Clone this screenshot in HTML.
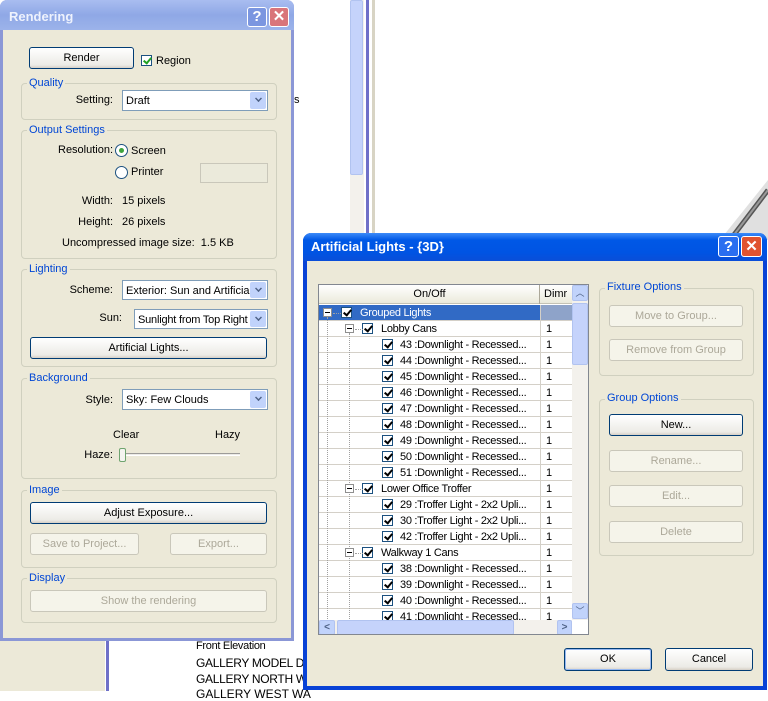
<!DOCTYPE html>
<html><head><meta charset="utf-8"><style>
*{box-sizing:border-box;margin:0;padding:0}
body{width:768px;height:691px;position:relative;overflow:hidden;background:#fff;font-family:"Liberation Sans",sans-serif;font-size:11px;color:#000}
.a{position:absolute}
.dlg{background:#ece9d8}
.grp{position:absolute;border:1px solid #d0d0bf;border-radius:4px}
.lg{position:absolute;background:#ece9d8;color:#0046d5;padding:0 2px;font-size:11px}
.btn{position:absolute;border:1px solid #003c74;border-radius:3px;background:linear-gradient(#fff,#ecebe6 85%,#d6d0c5);text-align:center;font-size:11px}
.btn.dis{border-color:#c9c7ba;background:#f5f4ea;color:#aca899}
.sel{position:absolute;background:#fff;border:1px solid #7f9db9;padding:4px 3px 0;font-size:11px;white-space:nowrap;overflow:hidden}
.sel:after{content:"";position:absolute;right:1px;top:1px;bottom:1px;width:16px;background:#c1d3fb;border-radius:2px}
.sel b{position:absolute;right:5px;top:4px;width:7px;height:7px;border-right:2px solid #4d6185;border-bottom:2px solid #4d6185;transform:rotate(45deg) scale(.7);z-index:2}
.cb{position:absolute;width:11px;height:11px;border:1px solid #1c5180;background:#fff}
.cb:after{content:"";position:absolute;left:3px;top:0px;width:3px;height:6px;border-right:2px solid #000;border-bottom:2px solid #000;transform:rotate(40deg)}
.cb.g:after{border-color:#21a121}
.row{position:absolute;left:0;width:221px;height:16px;border-bottom:1px solid #d4d0c8;line-height:16px;white-space:nowrap;letter-spacing:-.3px}
.dc{position:absolute;left:221px;width:33px;height:16px;border-bottom:1px solid #d4d0c8;border-left:1px solid #d4d0c8;line-height:16px;padding-left:5px}
.mb{position:absolute;width:9px;height:9px;border:1px solid #8f8f8f;background:#fff;z-index:2}
.mb:after{content:"";position:absolute;left:1px;top:3px;width:5px;height:1px;background:#000}
.vl{position:absolute;width:0;border-left:1px dotted #a0a0a0}
.hl{position:absolute;height:0;border-top:1px dotted #a0a0a0;width:8px}
.r{text-align:right}
</style></head><body>
<div class="a" style="left:350px;top:0;width:14px;height:233px;background:#f3f1ec"></div>
<div class="a" style="left:350px;top:0;width:13px;height:175px;background:#c5d3fb;border:1px solid #b1c3f0;border-radius:2px"></div>
<div class="a" style="left:366px;top:0;width:3px;height:233px;background:#6f70c8"></div>
<div class="a" style="left:372px;top:0;width:3px;height:233px;background:#d8d4c4"></div>
<svg class="a" style="left:700px;top:170px" width="68" height="70"><polygon points="68,10 68,70 20,70" fill="#e0e0e0"/><line x1="30" y1="70" x2="68" y2="20" stroke="#555" stroke-width="5"/><line x1="30" y1="70" x2="68" y2="20" stroke="#999" stroke-width="2"/></svg>
<div class="a" style="left:0;top:641px;width:105px;height:50px;background:#ece9d8"></div>
<div class="a" style="left:106px;top:641px;width:3px;height:50px;background:#6f70c8"></div>
<div class="a" style="left:196px;top:640px;font-size:11px;letter-spacing:-.3px">Front Elevation</div>
<div class="a" style="left:196px;top:656px;font-size:12px;letter-spacing:-.3px">GALLERY MODEL DIS</div>
<div class="a" style="left:196px;top:672px;font-size:12px;letter-spacing:-.3px">GALLERY NORTH WA</div>
<div class="a" style="left:196px;top:687px;font-size:12px">GALLERY WEST WA</div>
<div class="a" style="left:294px;top:94px;font-size:11px">s</div>

<div class="a dlg" style="left:0;top:0;width:294px;height:641px;border:3px solid #8b97d6;border-top:0;border-radius:7px 7px 0 0"></div>
<div class="a" style="left:0;top:0;width:294px;height:30px;background:linear-gradient(#a9bdf0,#8fa8e6 50%,#9cb3ea);border-radius:7px 7px 0 0"></div>
<div class="a" style="left:9px;top:9px;color:#eef2fd;font-weight:bold;font-size:13px">Rendering</div>
<div class="a" style="left:247px;top:7px;width:20px;height:20px;border:1px solid #fff;border-radius:3px;background:#7b96e0;color:#fff;font-weight:bold;font-size:15px;text-align:center;line-height:18px">?</div>
<div class="a" style="left:269px;top:7px;width:20px;height:20px;border:1px solid #fff;border-radius:3px;background:#d9757a;color:#fff;font-weight:bold;font-size:15px;text-align:center;line-height:18px">✕</div>
<div class="btn" style="left:29px;top:47px;width:105px;height:22px;line-height:20px">Render</div>
<div class="cb g" style="left:141px;top:55px"></div>
<div class="a" style="left:156px;top:55px">Region</div>

<div class="grp" style="left:21px;top:83px;width:256px;height:37px"></div>
<div class="lg" style="left:27px;top:77px">Quality</div>
<div class="a r" style="left:40px;top:94px;width:73px">Setting:</div>
<div class="sel" style="left:122px;top:90px;width:146px;height:21px">Draft<b></b></div>

<div class="grp" style="left:21px;top:130px;width:256px;height:129px"></div>
<div class="lg" style="left:27px;top:124px">Output Settings</div>
<div class="a" style="left:58px;top:144px">Resolution:</div>
<div class="a" style="left:115px;top:144px;width:13px;height:13px;border:1px solid #1c5180;border-radius:50%;background:#fff"></div>
<div class="a" style="left:119px;top:148px;width:5px;height:5px;border-radius:50%;background:#3ca33c"></div>
<div class="a" style="left:131px;top:145px">Screen</div>
<div class="a" style="left:115px;top:166px;width:13px;height:13px;border:1px solid #1c5180;border-radius:50%;background:#fff"></div>
<div class="a" style="left:131px;top:166px">Printer</div>
<div class="a" style="left:200px;top:163px;width:68px;height:20px;border:1px solid #c9c7ba;background:#ebeadb"></div>
<div class="a r" style="left:40px;top:195px;width:73px">Width:</div>
<div class="a" style="left:122px;top:195px">15 pixels</div>
<div class="a r" style="left:40px;top:216px;width:73px">Height:</div>
<div class="a" style="left:122px;top:216px">26 pixels</div>
<div class="a" style="left:62px;top:237px">Uncompressed image size:&nbsp; 1.5 KB</div>

<div class="grp" style="left:21px;top:269px;width:256px;height:98px"></div>
<div class="lg" style="left:27px;top:263px">Lighting</div>
<div class="a r" style="left:40px;top:284px;width:73px">Scheme:</div>
<div class="sel" style="left:122px;top:280px;width:146px;height:20px">Exterior: Sun and Artificia<b></b></div>
<div class="a r" style="left:60px;top:312px;width:62px">Sun:</div>
<div class="sel" style="left:134px;top:309px;width:134px;height:20px;letter-spacing:-.2px">Sunlight from Top Right<b></b></div>
<div class="btn" style="left:30px;top:337px;width:237px;height:22px;line-height:20px">Artificial Lights...</div>

<div class="grp" style="left:21px;top:378px;width:256px;height:101px"></div>
<div class="lg" style="left:27px;top:372px">Background</div>
<div class="a r" style="left:40px;top:394px;width:73px">Style:</div>
<div class="sel" style="left:122px;top:389px;width:146px;height:21px">Sky: Few Clouds<b></b></div>
<div class="a" style="left:113px;top:429px">Clear</div>
<div class="a" style="left:215px;top:429px">Hazy</div>
<div class="a r" style="left:40px;top:449px;width:73px">Haze:</div>
<div class="a" style="left:126px;top:453px;width:114px;height:3px;border-top:1px solid #9d9c99;border-bottom:1px solid #fff;background:#ecebe6"></div>
<div class="a" style="left:119px;top:448px;width:7px;height:14px;border:1px solid #6fa46f;border-radius:2px;background:#f4f4f0"></div>

<div class="grp" style="left:21px;top:490px;width:256px;height:78px"></div>
<div class="lg" style="left:27px;top:484px">Image</div>
<div class="btn" style="left:30px;top:502px;width:237px;height:22px;line-height:20px">Adjust Exposure...</div>
<div class="btn dis" style="left:30px;top:533px;width:109px;height:22px;line-height:20px">Save to Project...</div>
<div class="btn dis" style="left:170px;top:533px;width:97px;height:22px;line-height:20px">Export...</div>

<div class="grp" style="left:21px;top:578px;width:256px;height:45px"></div>
<div class="lg" style="left:27px;top:572px">Display</div>
<div class="btn dis" style="left:30px;top:590px;width:237px;height:22px;line-height:20px">Show the rendering</div>

<div class="a dlg" style="left:303px;top:233px;width:464px;height:457px;border:4px solid #0842d6;border-top:0;border-radius:8px 8px 0 0"></div>
<div class="a" style="left:303px;top:233px;width:464px;height:28px;background:linear-gradient(#3d8bf8,#0058e6 25%,#0054e3 70%,#0a4ed8);border-radius:8px 8px 0 0"></div>
<div class="a" style="left:311px;top:239px;color:#fff;font-weight:bold;font-size:13px">Artificial Lights - {3D}</div>
<div class="a" style="left:718px;top:236px;width:21px;height:21px;border:1px solid #fff;border-radius:3px;background:#2a6ef0;color:#fff;font-weight:bold;font-size:15px;text-align:center;line-height:19px">?</div>
<div class="a" style="left:741px;top:236px;width:21px;height:21px;border:1px solid #fff;border-radius:3px;background:#e0532f;color:#fff;font-weight:bold;font-size:15px;text-align:center;line-height:19px">✕</div>

<div class="a" style="left:318px;top:284px;width:271px;height:351px;border:1px solid #828790;background:#fff;overflow:hidden">
 <div class="a" style="left:0;top:0;width:253px;height:19px;background:linear-gradient(#fff,#ebeadb);border-bottom:1px solid #c4c2b5"></div>
 <div class="a" style="left:0;top:3px;width:221px;text-align:center">On/Off</div>
 <div class="a" style="left:220px;top:0;width:1px;height:19px;background:#aca899"></div>
 <div class="a" style="left:225px;top:3px">Dimr</div>
 <div class="a" style="left:0;top:20px;width:253px;height:316px;overflow:hidden">
  <div class="row" style="top:0;background:#316ac5;color:#fff"><span class="mb" style="left:4px;top:3px"></span><span class="cb" style="left:22px;top:2px"></span><span class="a" style="left:41px;top:0">Grouped Lights</span></div>
  <div class="dc" style="top:0;background:#8ea3c9"></div>
  <div class="row" style="top:16px"><span class="mb" style="left:26px;top:3px"></span><span class="cb" style="left:43px;top:2px"></span><span class="a" style="left:62px">Lobby Cans</span></div><div class="dc" style="top:16px">1</div>
  <div class="row" style="top:32px"><span class="cb" style="left:63px;top:2px"></span><span class="a" style="left:81px">43 :Downlight - Recessed...</span></div><div class="dc" style="top:32px">1</div>
  <div class="row" style="top:48px"><span class="cb" style="left:63px;top:2px"></span><span class="a" style="left:81px">44 :Downlight - Recessed...</span></div><div class="dc" style="top:48px">1</div>
  <div class="row" style="top:64px"><span class="cb" style="left:63px;top:2px"></span><span class="a" style="left:81px">45 :Downlight - Recessed...</span></div><div class="dc" style="top:64px">1</div>
  <div class="row" style="top:80px"><span class="cb" style="left:63px;top:2px"></span><span class="a" style="left:81px">46 :Downlight - Recessed...</span></div><div class="dc" style="top:80px">1</div>
  <div class="row" style="top:96px"><span class="cb" style="left:63px;top:2px"></span><span class="a" style="left:81px">47 :Downlight - Recessed...</span></div><div class="dc" style="top:96px">1</div>
  <div class="row" style="top:112px"><span class="cb" style="left:63px;top:2px"></span><span class="a" style="left:81px">48 :Downlight - Recessed...</span></div><div class="dc" style="top:112px">1</div>
  <div class="row" style="top:128px"><span class="cb" style="left:63px;top:2px"></span><span class="a" style="left:81px">49 :Downlight - Recessed...</span></div><div class="dc" style="top:128px">1</div>
  <div class="row" style="top:144px"><span class="cb" style="left:63px;top:2px"></span><span class="a" style="left:81px">50 :Downlight - Recessed...</span></div><div class="dc" style="top:144px">1</div>
  <div class="row" style="top:160px"><span class="cb" style="left:63px;top:2px"></span><span class="a" style="left:81px">51 :Downlight - Recessed...</span></div><div class="dc" style="top:160px">1</div>
  <div class="row" style="top:176px"><span class="mb" style="left:26px;top:3px"></span><span class="cb" style="left:43px;top:2px"></span><span class="a" style="left:62px">Lower Office Troffer</span></div><div class="dc" style="top:176px">1</div>
  <div class="row" style="top:192px"><span class="cb" style="left:63px;top:2px"></span><span class="a" style="left:81px">29 :Troffer Light - 2x2 Upli...</span></div><div class="dc" style="top:192px">1</div>
  <div class="row" style="top:208px"><span class="cb" style="left:63px;top:2px"></span><span class="a" style="left:81px">30 :Troffer Light - 2x2 Upli...</span></div><div class="dc" style="top:208px">1</div>
  <div class="row" style="top:224px"><span class="cb" style="left:63px;top:2px"></span><span class="a" style="left:81px">42 :Troffer Light - 2x2 Upli...</span></div><div class="dc" style="top:224px">1</div>
  <div class="row" style="top:240px"><span class="mb" style="left:26px;top:3px"></span><span class="cb" style="left:43px;top:2px"></span><span class="a" style="left:62px">Walkway 1 Cans</span></div><div class="dc" style="top:240px">1</div>
  <div class="row" style="top:256px"><span class="cb" style="left:63px;top:2px"></span><span class="a" style="left:81px">38 :Downlight - Recessed...</span></div><div class="dc" style="top:256px">1</div>
  <div class="row" style="top:272px"><span class="cb" style="left:63px;top:2px"></span><span class="a" style="left:81px">39 :Downlight - Recessed...</span></div><div class="dc" style="top:272px">1</div>
  <div class="row" style="top:288px"><span class="cb" style="left:63px;top:2px"></span><span class="a" style="left:81px">40 :Downlight - Recessed...</span></div><div class="dc" style="top:288px">1</div>
  <div class="row" style="top:304px"><span class="cb" style="left:63px;top:2px"></span><span class="a" style="left:81px">41 :Downlight - Recessed...</span></div><div class="dc" style="top:304px">1</div>
  <div class="vl" style="left:8px;top:12px;height:310px"></div>
  <div class="vl" style="left:30px;top:28px;height:290px"></div>
  <div class="hl" style="left:36px;top:24px"></div><div class="hl" style="left:36px;top:184px"></div><div class="hl" style="left:36px;top:248px"></div>
  <div class="hl" style="left:14px;top:8px"></div>
 </div>
 <div class="a" style="left:253px;top:0;width:16px;height:335px;background:#f3f1ec"></div>
 <div class="a" style="left:253px;top:0;width:16px;height:16px;background:#c1d3fb;border:1px solid #b1c3f0;border-radius:2px;text-align:center;color:#4d6185;font-size:9px;line-height:14px">︿</div>
 <div class="a" style="left:253px;top:18px;width:16px;height:62px;background:#c5d3fb;border:1px solid #b1c3f0;border-radius:2px"></div>
 <div class="a" style="left:253px;top:318px;width:16px;height:16px;background:#c1d3fb;border:1px solid #b1c3f0;border-radius:2px;text-align:center;color:#4d6185;font-size:9px;line-height:14px">﹀</div>
 <div class="a" style="left:0;top:335px;width:253px;height:15px;background:#f3f1ec"></div>
 <div class="a" style="left:0;top:335px;width:16px;height:15px;background:#c1d3fb;border:1px solid #b1c3f0;border-radius:2px;color:#4d6185;font-size:10px;text-align:center;line-height:13px;font-weight:bold">&lt;</div>
 <div class="a" style="left:18px;top:335px;width:177px;height:15px;background:#c5d3fb;border:1px solid #b1c3f0;border-radius:2px"></div>
 <div class="a" style="left:238px;top:335px;width:15px;height:15px;background:#c1d3fb;border:1px solid #b1c3f0;border-radius:2px;color:#4d6185;font-size:10px;text-align:center;line-height:13px;font-weight:bold">&gt;</div>
</div>

<div class="grp" style="left:599px;top:288px;width:155px;height:88px"></div>
<div class="lg" style="left:605px;top:281px">Fixture Options</div>
<div class="btn dis" style="left:609px;top:305px;width:134px;height:22px;line-height:20px">Move to Group...</div>
<div class="btn dis" style="left:609px;top:339px;width:134px;height:22px;line-height:20px">Remove from Group</div>

<div class="grp" style="left:599px;top:399px;width:155px;height:157px"></div>
<div class="lg" style="left:605px;top:392px">Group Options</div>
<div class="btn" style="left:609px;top:414px;width:134px;height:22px;line-height:20px">New...</div>
<div class="btn dis" style="left:609px;top:450px;width:134px;height:22px;line-height:20px">Rename...</div>
<div class="btn dis" style="left:609px;top:485px;width:134px;height:22px;line-height:20px">Edit...</div>
<div class="btn dis" style="left:609px;top:521px;width:134px;height:22px;line-height:20px">Delete</div>

<div class="btn" style="left:564px;top:648px;width:88px;height:23px;line-height:21px;border-color:#003c74;box-shadow:inset 0 0 0 1px #97b8f0">OK</div>
<div class="btn" style="left:665px;top:648px;width:88px;height:23px;line-height:21px">Cancel</div>
</body></html>
